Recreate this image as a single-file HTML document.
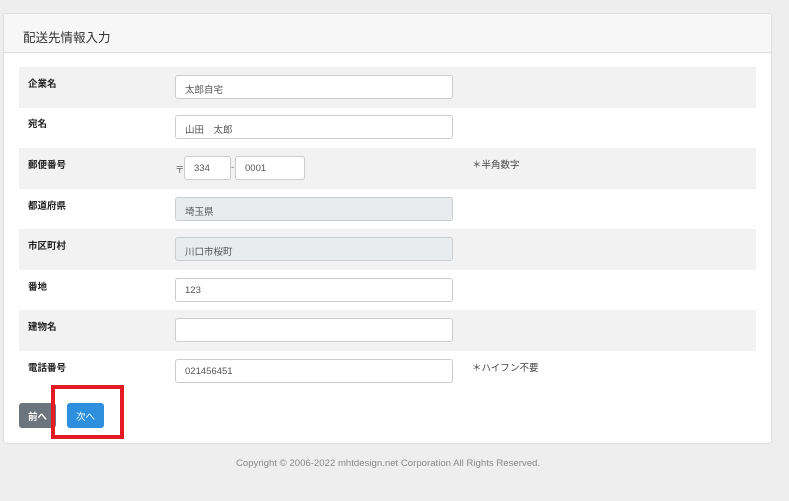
<!DOCTYPE html>
<html><head><meta charset="utf-8"><style>
*{box-sizing:border-box;margin:0;padding:0}
body{width:789px;height:501px;background:#eeeeee;font-family:"Liberation Sans","Noto Sans CJK JP",sans-serif;position:relative;overflow:hidden;color:#333}
.card{position:absolute;left:3px;top:13px;width:769px;height:431px;background:#fff;border:1px solid #dcdcdc;border-radius:3px}
.hd{position:absolute;left:0;top:0;width:100%;height:39px;background:#f7f7f7;border-bottom:1px solid #ddd;font-size:12.5px;padding:13px 0 0 19px;color:#333}
.row{position:absolute;left:19px;width:737px;height:41px}
.g{background:#f2f2f2}
.lb{position:absolute;left:9px;top:9px;font-size:9.5px;font-weight:bold;color:#222}
.in{position:absolute;left:156px;top:8px;width:278px;height:24px;border:1px solid #ccc;border-radius:3px;background:#fff;font-size:9.5px;color:#555;padding:6px 0 0 9px}
.dis{background:#e9ecef}
.nt{position:absolute;left:453px;top:9px;font-size:9.5px;color:#444}
.btn{position:absolute;top:403px;height:25px;border-radius:3px;color:#fff;font-size:9.5px;padding-top:6px;text-align:center}
</style></head><body>
<div class="card">
<div class="hd">配送先情報入力</div>
</div>
<div class="row g" style="top:67px"><div class="lb">企業名</div><div class="in">太郎自宅</div></div>
<div class="row" style="top:107px"><div class="lb">宛名</div><div class="in">山田　太郎</div></div>
<div class="row g" style="top:148px"><div class="lb">郵便番号</div>
<div style="position:absolute;left:156px;top:14px;font-size:9.5px;color:#666">〒</div>
<div class="in" style="left:165px;width:47px;padding-left:9px">334</div>
<div style="position:absolute;left:212px;top:14px;font-size:9.5px;color:#666">-</div>
<div class="in" style="left:216px;width:70px;padding-left:9px">0001</div>
<div class="nt">＊半角数字</div></div>
<div class="row" style="top:189px"><div class="lb">都道府県</div><div class="in dis">埼玉県</div></div>
<div class="row g" style="top:229px"><div class="lb">市区町村</div><div class="in dis">川口市桜町</div></div>
<div class="row" style="top:270px"><div class="lb">番地</div><div class="in">123</div></div>
<div class="row g" style="top:310px"><div class="lb">建物名</div><div class="in"></div></div>
<div class="row" style="top:351px"><div class="lb">電話番号</div><div class="in">021456451</div><div class="nt">＊ハイフン不要</div></div>
<div class="btn" style="left:19px;width:37px;background:#6c757d;font-weight:bold">前へ</div>
<div class="btn" style="left:67px;width:37px;background:#2d8fdd">次へ</div>
<div style="position:absolute;left:51px;top:385px;width:73px;height:54px;border:4px solid #e31b23"></div>
<div style="position:absolute;left:0;width:776px;top:458px;text-align:center;font-size:9.6px;color:#888">Copyright © 2006-2022 mhtdesign.net Corporation All Rights Reserved.</div>
</body></html>
